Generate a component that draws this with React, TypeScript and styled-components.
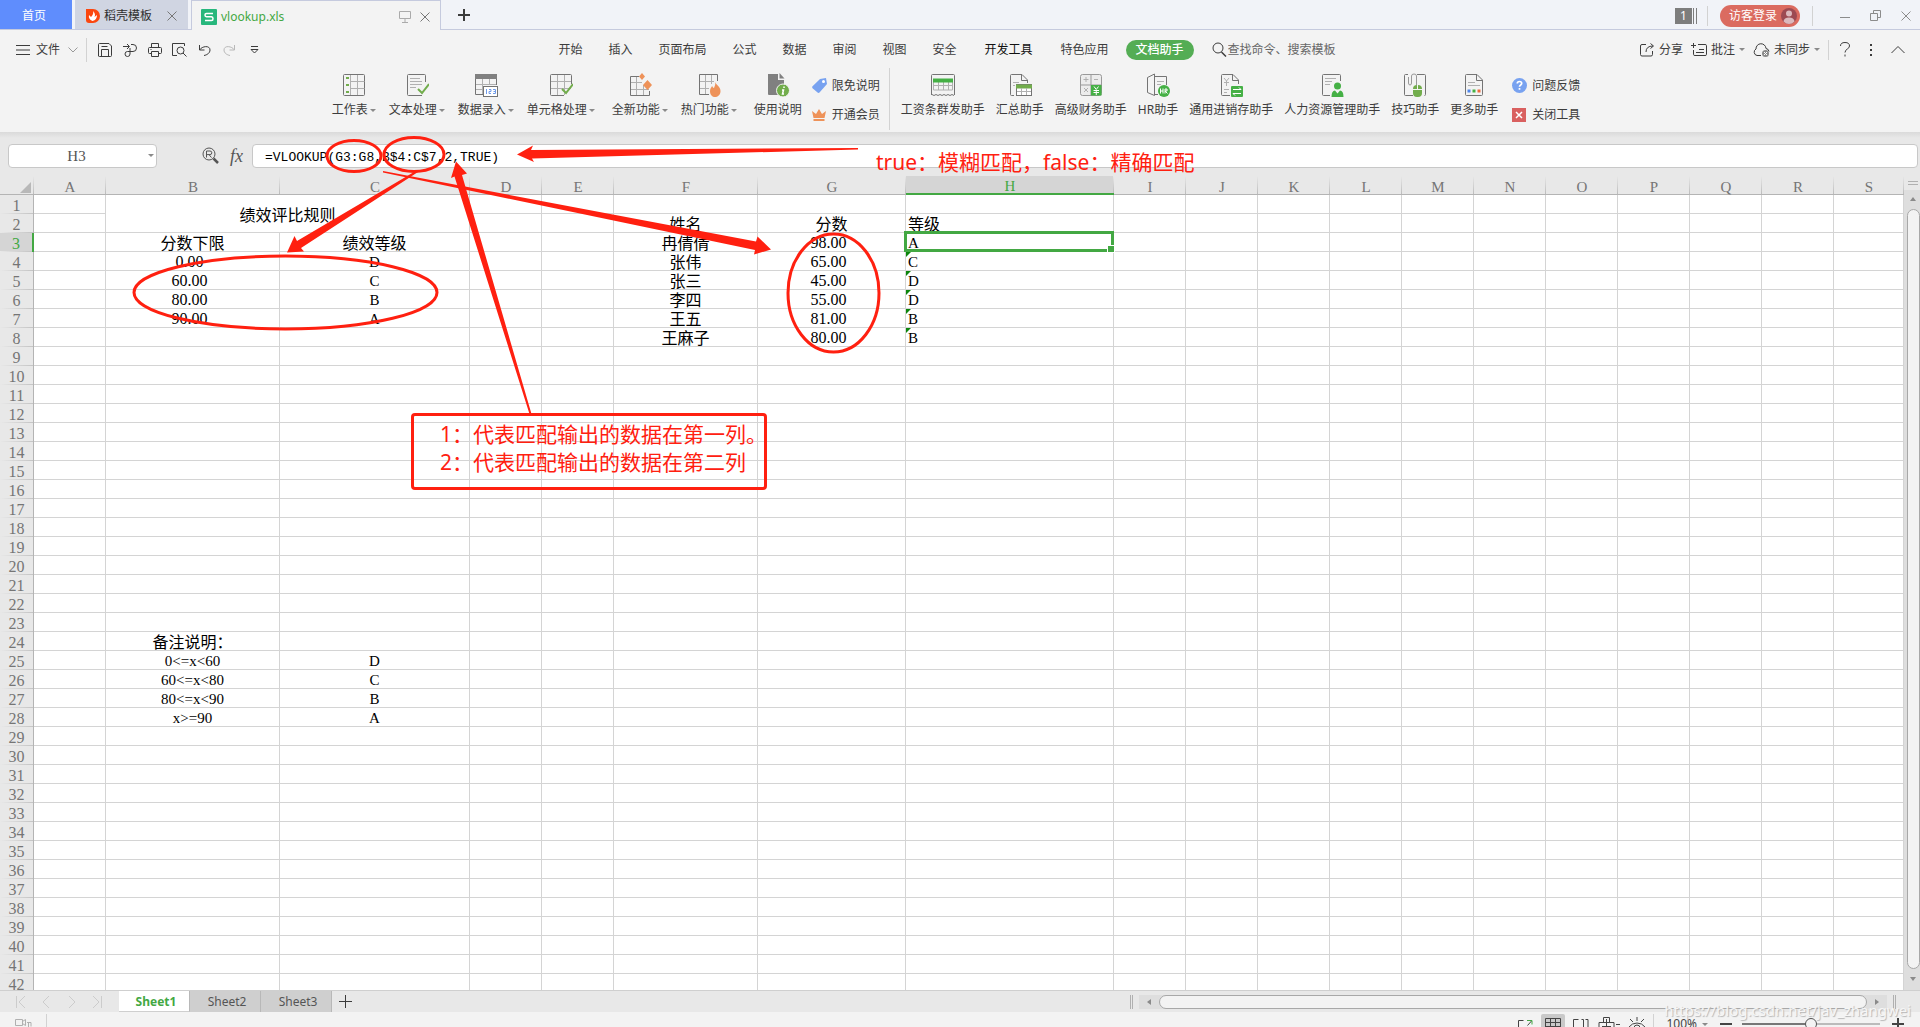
import React from 'react';
import styled, { createGlobalStyle, css } from 'styled-components';

const UI_FONT = '"Noto Sans", "Noto Sans CJK SC", sans-serif';
const CELL_FONT = '"Liberation Serif", "Noto Sans CJK SC", serif';
const MONO_FONT = '"Liberation Mono", "Noto Sans CJK SC", monospace';
const GREEN = '#43a843';
const RED = '#ff2010';

const GlobalStyle = createGlobalStyle`
  * { box-sizing: border-box; }
  body { margin: 0; background: #f3f3f3; overflow: hidden; }
  button, input { font: inherit; color: inherit; margin: 0; }
  svg { display: block; flex: none; }
`;

const Window = styled.div`
  position: relative;
  display: flex;
  flex-direction: column;
  height: 100vh;
  overflow: hidden;
  background: #e8e8e8;
  color: #3c3c3c;
  font-family: ${UI_FONT};
  font-size: 12px;
  line-height: 16px;
`;

const PlainButton = styled.button`
  display: flex;
  align-items: center;
  padding: 0;
  border: 0;
  background: none;
  white-space: nowrap;
  cursor: pointer;
`;

const Divider = styled.i<{ $h: number; $after?: number }>`
  flex: none;
  width: 1px;
  height: ${(p) => p.$h}px;
  margin-right: ${(p) => p.$after ?? 0}px;
  background: #d2d2d2;
`;

const Caret = styled.i`
  flex: none;
  border: 3px solid transparent;
  border-top-color: #8a8a8a;
  border-bottom-width: 0;
`;

/* ---------- title bar ---------- */

const TitleBar = styled.header`
  display: flex;
  flex: none;
  height: 30px;
  background: #f1f3f8;
  box-shadow: inset 0 -1px #c5cade;
`;

const HomeTab = styled(PlainButton)`
  justify-content: center;
  width: 72px;
  height: 29px;
  margin-right: 3px;
  padding: 2px 4px 0 0;
  background: #5f8dfd;
  color: #fff;
`;

const DocTab = styled.div<{ $active?: boolean; $w: number }>`
  display: flex;
  align-items: center;
  width: ${(p) => p.$w}px;
  padding: 3px 11px 0;
  background: #d0d5e2;
  margin: 0 3px 1px 0;
  color: #2f2f2f;
  ${(p) =>
    p.$active &&
    css`
      margin: 0;
      padding: 2px 10px 0 9px;
      background: #f3f3f3;
      border: 1px solid #c5cade;
      border-bottom: 0;
      color: ${GREEN};
    `}
`;

const TabTitle = styled(PlainButton)`
  flex: 1;
  gap: 4px;
`;

const TabAction = styled(PlainButton)`
  margin-left: 9px;
  color: #777;
`;

const AddTab = styled(PlainButton)`
  margin-left: 17px;
`;

const WindowTools = styled.div`
  display: flex;
  align-items: center;
  margin-left: auto;
  padding: 1px 9px 0 0;
  color: #8c8c8c;
`;

const CountBadge = styled.span`
  width: 17px;
  height: 16px;
  background: #7d7d7d;
  color: #fff;
  text-align: center;
  line-height: 16px;
`;

const BadgeBars = styled.i`
  width: 4px;
  height: 16px;
  margin: 0 10px 0 1px;
  border: solid #7d7d7d;
  border-width: 0 1px;
`;

const LoginButton = styled(PlainButton)`
  gap: 4px;
  height: 22px;
  margin: 0 12px;
  padding: 0 3px 0 9px;
  border-radius: 11px;
  background: #db6b60;
  color: #fff;
`;

const WindowButtons = styled.div`
  display: flex;
  gap: 20px;
  margin-left: 27px;
`;

/* ---------- menu row ---------- */

const MenuRow = styled.nav`
  display: grid;
  grid-template-columns: 1fr auto 1fr;
  flex: none;
  height: 38px;
  padding-top: 1px;
  background: #f3f3f3;
`;

const QuickTools = styled.div`
  display: flex;
  align-items: center;
  padding-left: 16px;
`;

const FileButton = styled(PlainButton)`
  gap: 6px;
  margin-right: 8px;
  svg:last-child { margin-left: 2px; }
`;

const QuickButton = styled(PlainButton)`
  justify-content: center;
  width: 25px;
  height: 24px;
`;

const QuickGroup = styled.div`
  display: flex;
  margin-left: 5px;
`;

const MenuTabs = styled.div`
  display: flex;
  align-items: center;
  padding-right: 35px;
`;

const MenuTab = styled(PlainButton)<{ $strong?: boolean; $last?: boolean }>`
  height: 20px;
  padding: 0 13px;
  ${(p) => p.$strong && css` padding: 0 15px; color: #111; `}
  ${(p) => p.$last && css` padding-right: 17px; `}
`;

const ActiveMenuTab = styled(PlainButton)`
  height: 20px;
  margin-right: 18px;
  padding: 0 10px;
  border-radius: 10px;
  background: #54ad54;
  color: #fff;
  font-weight: 500;
`;

const SearchBox = styled.label`
  display: flex;
  align-items: center;
  gap: 1px;
  input {
    width: 112px;
    padding: 0;
    border: 0;
    outline: 0;
    background: none;
  }
  input::placeholder { color: #666; opacity: 1; }
`;

const MenuRight = styled.div`
  display: flex;
  align-items: center;
  justify-content: flex-end;
  padding-right: 15px;
`;

const MenuAction = styled(PlainButton)`
  gap: 4px;
  margin-right: 8px;
`;

const MenuIcons = styled.div`
  display: flex;
  align-items: center;
  gap: 18px;
  margin-left: 10px;
`;

/* ---------- ribbon ---------- */

const Ribbon = styled.div`
  display: flex;
  flex: none;
  justify-content: center;
  height: 64px;
  padding-right: 8px;
  background: #f3f3f3;
`;

const RibbonGroup = styled.div<{ $gap: number; $after: number }>`
  display: flex;
  gap: ${(p) => p.$gap}px;
  margin-right: ${(p) => p.$after}px;
`;

const RibbonButton = styled(PlainButton)`
  flex-direction: column;
  gap: 5px;
  padding-top: 5px;
`;

const RibbonLabel = styled.span`
  display: flex;
  align-items: center;
  gap: 2px;
`;

const RibbonStack = styled.div<{ $after: number }>`
  display: flex;
  flex-direction: column;
  padding-top: 3px;
  margin-right: ${(p) => p.$after}px;
`;

const StackButton = styled(PlainButton)`
  gap: 5px;
  height: 29px;
`;

/* ---------- formula bar ---------- */

const FormulaBar = styled.div`
  display: flex;
  flex: none;
  align-items: center;
  height: 44px;
  padding: 3px 2px 0 8px;
  background: linear-gradient(#dadada, #e8e8e8 6px);
  color: #555;
`;

const NameBox = styled.div`
  display: flex;
  align-items: center;
  width: 149px;
  height: 24px;
  margin-right: 45px;
  padding-right: 2px;
  border: 1px solid #c8c8c8;
  border-radius: 4px;
  background: #fff;
  input {
    flex: 1;
    width: 100px;
    padding: 2px 4px 0 0;
    border: 0;
    outline: 0;
    background: none;
    text-align: center;
    font: 15px ${CELL_FONT};
  }
`;

const FxLabel = styled(PlainButton)`
  margin: 0 9px 0 11px;
  font: italic 18px/22px "Liberation Serif", serif;
`;

const FormulaInput = styled.input`
  flex: 1;
  height: 24px;
  padding: 3px 12px 0;
  border: 1px solid #c8c8c8;
  border-radius: 4px;
  outline: 0;
  background: #fff;
  && { color: #000; font: 13px ${MONO_FONT}; }
`;

/* ---------- sheet ---------- */

const SheetArea = styled.main`
  display: flex;
  flex: 1;
  min-height: 0;
`;

const GridClip = styled.div`
  flex: 1;
  min-width: 0;
  overflow: hidden;
`;

const Grid = styled.table`
  width: 100%;
  table-layout: fixed;
  border-collapse: separate;
  border-spacing: 0;
  background: #fff;
  color: #000;
  font: 16px/16px ${CELL_FONT};
`;

const ColHead = styled.th<{ $on?: boolean }>`
  height: 19px;
  padding: 4px 0 0;
  border-bottom: 1px solid #b4b4b4;
  background: linear-gradient(#e8e8e8, #bcbcbc) right / 1px 100% no-repeat #e8e8e8;
  color: #757575;
  font: 15px/14px ${CELL_FONT};
  ${(p) =>
    p.$on &&
    css`
      padding-top: 3px;
      border-bottom: 2px solid ${GREEN};
      background-color: #d5d5d5;
      color: ${GREEN};
    `}
`;

const RowHead = styled.th<{ $on?: boolean }>`
  height: 19px;
  padding: 3px 0 0;
  border-right: 1px solid #b4b4b4;
  background: linear-gradient(90deg, #e8e8e8, #c4c4c4) bottom / 100% 1px no-repeat #e8e8e8;
  color: #757575;
  font-weight: 400;
  ${(p) =>
    p.$on &&
    css`
      border-right: 2px solid ${GREEN};
      background-color: #d5d5d5;
      color: ${GREEN};
    `}
`;

const CornerHead = styled(ColHead)`
  svg { margin: 0 3px 0 auto; }
`;

type Kind = 'cjk' | 'num' | 'letter' | 'expr';

const Cell = styled.td<{ $kind?: Kind; $left?: boolean; $mark?: boolean }>`
  position: relative;
  height: 19px;
  padding: 2px 0 0 ${(p) => (p.$left ? 2 : 0)}px;
  border: solid #d4d4d4;
  border-width: 0 1px 1px 0;
  text-align: ${(p) => (p.$left ? 'left' : 'center')};
  white-space: nowrap;
  ${(p) => p.$kind === 'cjk' && css` padding-top: 0; font-family: "Noto Sans CJK SC", sans-serif; `}
  ${(p) => p.$kind === 'num' && css` padding-right: 6px; `}
  ${(p) => (p.$kind === 'expr' || p.$kind === 'letter') && css` font-size: 15px; `}
  ${(p) =>
    p.$mark &&
    css`
      &::before {
        content: '';
        position: absolute;
        top: 0;
        left: 0;
        border: solid transparent;
        border-width: 5px 5px 0 0;
        border-top-color: #0b850b;
      }
    `}
`;

const Selection = styled.span`
  position: absolute;
  z-index: 1;
  inset: -2px -1px -1px -2px;
  border: 3px solid ${GREEN};
  &::after {
    content: '';
    position: absolute;
    right: -4px;
    bottom: -4px;
    width: 6px;
    height: 6px;
    border: 1px solid #fff;
    background: ${GREEN};
  }
`;

const VScroll = styled.div`
  display: flex;
  flex-direction: column;
  align-items: center;
  width: 16px;
  padding: 0 0 1px 2px;
  background: linear-gradient(#e8e8e8 14px, #dedede 14px);
`;

const SplitHandle = styled.i<{ $vertical?: boolean }>`
  flex: none;
  width: ${(p) => (p.$vertical ? 3 : 10)}px;
  height: ${(p) => (p.$vertical ? 14 : 4)}px;
  border: solid #b0b0b0;
  border-width: ${(p) => (p.$vertical ? '0 1px' : '1px 0')};
`;

const ScrollThumb = styled.div<{ $vertical?: boolean }>`
  flex: 1;
  border: 1px solid #a8a8a8;
  border-radius: 7px;
  background: #f3f3f3;
  ${(p) => (p.$vertical ? 'width: 13px;' : 'height: 14px;')}
`;

const ArrowButton = styled(PlainButton)`
  justify-content: center;
  width: 20px;
  height: 20px;
`;

const VTop = styled.div`
  display: flex;
  flex-direction: column;
  align-items: center;
  padding-top: 5px;
  gap: 4px;
`;

/* ---------- sheet tabs and status ---------- */

const SheetBar = styled.div`
  display: flex;
  flex: none;
  height: 22px;
  border-top: 1px solid #cfcfcf;
`;

const SheetNav = styled.div`
  display: flex;
  align-items: center;
  gap: 10px;
  width: 119px;
  padding-left: 12px;
  color: #cccccc;
`;

const SheetTab = styled(PlainButton)<{ $active?: boolean }>`
  justify-content: center;
  width: 71px;
  padding: 1px 0 0 4px;
  border-right: 1px solid #b8b8b8;
  background: #cfcfcf;
  color: #555;
  ${(p) =>
    p.$active &&
    css`
      border-bottom: 1px solid #cfcfcf;
      background: #fff;
      color: ${GREEN};
      font-weight: 700;
    `}
`;

const AddSheet = styled(PlainButton)`
  margin-left: 7px;
`;

const HScroll = styled.div`
  display: flex;
  align-items: center;
  width: 766px;
  margin: 0 24px 0 auto;
`;

const HTrack = styled.div`
  display: flex;
  flex: 1;
  align-items: center;
  height: 14px;
  margin: 0 6px;
  background: #dedede;
`;

const StatusBar = styled.footer`
  display: flex;
  flex: none;
  align-items: flex-start;
  height: 15px;
  padding: 2px 16px 0 15px;
  overflow: hidden;
  background: #f3f3f3;
`;

const StatusItems = styled.div`
  display: flex;
  align-items: center;
  height: 20px;
  margin-left: auto;
  color: #444;
`;

const StatusDivider = styled(Divider)`
  margin-left: 14px;
`;

const ViewButton = styled(PlainButton)<{ $active?: boolean }>`
  justify-content: center;
  width: 24px;
  height: 20px;
  margin-right: 4px;
  border-radius: 2px;
  background: ${(p) => (p.$active ? '#c9c9c9' : 'none')};
`;

const ZoomValue = styled(PlainButton)`
  gap: 5px;
  margin: 0 12px 0 12px;
  font-size: 12px;
`;

const ZoomSlider = styled.input`
  && {
    width: 138px;
    height: 14px;
    margin: 0 12px 0 10px;
  }
  appearance: none;
  background: linear-gradient(90deg, #777 50%, #bbb 50%) center / 100% 2px no-repeat;
  &::-webkit-slider-thumb {
    appearance: none;
    width: 12px;
    height: 12px;
    border: 1px solid #555;
    border-radius: 50%;
    background: #f3f3f3;
  }
`;

/* ---------- annotations drawn over the sheet ---------- */

const Marks = styled.svg`
  position: absolute;
  top: 0;
  left: 0;
  z-index: 2;
  pointer-events: none;
`;

const Note = styled.div`
  position: absolute;
  z-index: 3;
  top: 148px;
  left: 876px;
  color: ${RED};
  font-size: 21px;
  line-height: 28px;
  white-space: nowrap;
`;

const BoxedNote = styled(Note)`
  top: 413px;
  left: 411px;
  width: 356px;
  height: 77px;
  padding: 4px 0 0 26px;
  border: 3px solid ${RED};
  border-radius: 4px;
  p { margin: 0; }
`;

const Watermark = styled.div`
  position: absolute;
  z-index: 4;
  right: 9px;
  bottom: 6px;
  color: #f6f6f6;
  font-size: 15px;
  line-height: 22px;
  text-shadow: 1px 1px 1px #b4b4b4;
`;

/* ---------- icons ---------- */

const Svg = ({ w = 14, h = 14, children, sw = 1 }: { w?: number; h?: number; sw?: number; children: React.ReactNode }) => (
  <svg width={w} height={h} viewBox={`0 0 ${w} ${h}`} fill="none" stroke="currentColor" strokeWidth={sw} aria-hidden="true">
    {children}
  </svg>
);

const CloseIcon = () => <Svg w={10} h={10}><path d="M.5.5l9 9M9.5.5l-9 9" /></Svg>;

const G = '#747474';
const L = '#b0b0b0';
const LEAF = '#72ad4c';
const BRIGHT = '#45b045';
const ORANGE = '#ee9259';

const gridLines = <path d="M8.5 2v20M15.5 2v20M2 8.5h20M2 15.5h20" stroke={L} />;
const check = <path d="M13 16l4 4 7-9" stroke={LEAF} strokeWidth="2" />;

const pictures: Record<string, React.ReactNode> = {
  sheet: <><rect x="1.5" y="1.5" width="21" height="21" rx="1" stroke={G} /><path d="M8.5 2v20M15.5 2v20M8.5 8.5h14M8.5 15.5h14" stroke={L} /><path d="M4 5h3M4 12h3M4 19h3" stroke={LEAF} strokeWidth="2" /></>,
  text: <><path d="M20.5 9V2.5q0-1-1-1h-16q-1 0-1 1v19q0 1 1 1H17" stroke={G} /><path d="M5 5.5h10M5 8.500h12M5 11.5h12M5 14.5h6" stroke={L} />{check}</>,
  entry: <><path d="M22.5 12V1.5h-21v20H10" stroke={G} /><path d="M1 3.5h22" stroke="#808080" strokeWidth="5" /><path d="M8.500 6v15M15.5 6v6M2 11.5h20M2 16.5h7" stroke={L} /><rect x="9.5" y="13.5" width="14" height="10" fill="#fff" stroke={G} /><path d="M12.5 16v5M15 16.5h2v2h-2v2h2M19 16.5h2.500v4H19M19.5 18.500h2" stroke="#6f9ae8" /></>,
  cell: <><path d="M22.5 11V2.5q0-1-1-1h-19q-1 0-1 1v19q0 1 1 1H15" stroke={G} />{gridLines}{check}</>,
  fresh: <><path d="M11 3.5H2.5v19h19V18" stroke={G} /><path d="M8.500 4v18M15.5 12v10M3 9.500h11M3 16.5h18" stroke={L} /><path d="M14 0l3 3.500-3 3.500-3-3.500zM19.500 7l4.500 5-4.500 5-4.500-5z" fill={ORANGE} stroke="none" /></>,
  hot: <><path d="M20.5 8V1.5h-18v20H12" stroke={G} /><path d="M8.500 2v19M14.5 2v9M3 8.500h14M3 15.5h9" stroke={L} /><path d="M18.500 9c0 3 5 4 5 9 0 4-3 6-5.500 6S13 22 13 18c0-3 2-4 2-5 1 1 1 2 2 2 1-2 1.500-4 1.500-6z" fill={ORANGE} stroke="none" /></>,
  manual: <><path d="M2 1h10v6h6v15H3q-1 0-1-1z" fill="#808080" stroke="none" /><path d="M13.500 0l5 5.500h-5z" fill="#808080" stroke="none" /><circle cx="17" cy="17.500" r="6.500" fill={LEAF} stroke="#f3f3f3" /><path d="M18 13.500V15M16 17h1.500l-1 4H18" stroke="#fff" strokeWidth="1.500" /></>,
  payroll: <><path d="M.5 22V2.5q0-1 1-1h21q1 0 1 1V22" stroke={G} /><path d="M1 21.5l2 1 2-1 2 1 2-1 2 1 2-1 2 1 2-1 2 1 2-1 2 1" stroke={G} /><path d="M2.5 6v11h19V6M7.5 7v10M12.5 7v10M17.5 7v10M3 12.5h18" stroke={L} /><path d="M2 7.500h20" stroke={BRIGHT} strokeWidth="4" /></>,
  summary: <><path d="M6 22.5H3.500q-1 0-1-1v-19q0-1 1-1H14l5.500 5.500v3M13.500 2v5.500h6" stroke={G} /><path d="M5 9.500h6M5 12.5h2" stroke={L} /><rect x="8.500" y="11.5" width="15" height="11" fill="#fff" stroke={G} /><path d="M8 13.5h16" stroke={LEAF} strokeWidth="4" /><path d="M13.5 15v7M18.500 15v7M9 18.500h14" stroke={L} /></>,
  finance: <><rect x="1.5" y="1.5" width="21" height="21" rx="2" fill="#ececec" stroke="#999" /><path d="M12 2v20M2 12h20" stroke="#999" /><rect x="12" y="12" width="10.500" height="10.500" fill={BRIGHT} stroke="none" /><path d="M7 4v5M4.500 6.500h5M15 6.500h4M5 15l4 4M9 15l-4 4" stroke={L} /><path d="M15 13.500l2.250 3 2.250-3M14.500 17.5h5.500M14.500 19.5h5.500M17.250 17v5" stroke="#fff" /></>,
  hr: <><path d="M8.500 1L1.500 4.500v15l7 3zM9 3.500h11.500V12M9 21.500h3" stroke={G} /><path d="M11 8.500h7M11 11.500h4" stroke={L} /><circle cx="18" cy="18" r="6" fill={BRIGHT} stroke="none" /><path d="M14.500 15.500v5M14.500 18h2.500M17 15.500v5M19 20.500V16h2v2h-2l2.500 2.500" stroke="#fff" /></>,
  stock: <><path d="M11 22.5H3.500q-1 0-1-1v-19q0-1 1-1H14l5.500 5.500V11M13.500 2v5.500h6" stroke={G} /><path d="M5 5l2.500 3L10 5M5 9.500h5M7.500 8v5M5 16.500h5M5 19.500h3" stroke={L} /><rect x="12" y="13" width="12" height="11" rx="1" fill={BRIGHT} stroke="none" /><path d="M14 16.500h8l-2-2M22 20.500h-8l2 2" stroke="#fff" /></>,
  people: <><path d="M10 22.5H3.500q-1 0-1-1v-19q0-1 1-1h16q1 0 1 1V8" stroke={G} /><path d="M5 5.500h11M5 8.500h7M5 11.500h5" stroke={L} /><circle cx="17.500" cy="13" r="3.500" fill={BRIGHT} stroke="none" /><path d="M11.500 24q0-6.500 3.500-6.500l2.500 3 2.500-3q3.500 0 3.500 6.500z" fill={BRIGHT} stroke="none" /></>,
  tips: <><path d="M5 1.5H2.500q-1 0-1 1v19q0 1 1 1H10M14 1.5h7.500q1 0 1 1v19q0 1-1 1" stroke={G} /><path d="M13.500 12V3q0-2-2.500-2T8.500 3v7q0 2-1.500 2t-1.500-2V4" stroke="#999" /><rect x="10" y="12" width="9" height="12" rx="4" fill={LEAF} stroke="none" /><path d="M14.500 12v5M10 16.500h9" stroke="#f3f3f3" /></>,
  more: <><path d="M4.500 22.500q-1 0-1-1v-19q0-1 1-1H15l5.500 5.500v14.500q0 1-1 1zM14.500 2v5.500h6" stroke={G} /><path d="M6 9.500h7M6 12.500h12" stroke={L} /><path d="M5.500 18h3" stroke="#4f86ea" strokeWidth="3" /><path d="M10.500 18h3" stroke={BRIGHT} strokeWidth="3" /><path d="M15.500 18h3" stroke="#ee6a3c" strokeWidth="3" /></>,
};

const Picture = ({ name }: { name: string }) => <Svg w={24} h={24}>{pictures[name]}</Svg>;

const quick: [string, React.ReactNode][] = [
  ['保存', <Svg><path d="M.5 13V1.500q0-1 1-1h9.500l2.500 2.500v9.500q0 1-1 1h-11q-1 0-1-.5zM3.500 13V6.500h7V13M3.500 3.500h6" /></Svg>],
  ['输出', <Svg><path d="M0 3.500h6M4 1l2.500 2.500L4 6M8 1.500h2a3.500 3.500 0 010 7H4.500a2.500 2.500 0 102.500 2.500V5" /></Svg>],
  ['打印', <Svg><path d="M3.500 4V.5h7V4M3.500 10.500H1.500q-1 0-1-1v-4q0-1 1-1h11q1 0 1 1v4q0 1-1 1h-2M3.500 8.500h7v5h-7zM2.500 6.500h1" /></Svg>],
  ['预览', <Svg w={15}><path d="M5 12.500H.5V.5h12V3" /><circle cx="8.500" cy="7.500" r="3.500" /><path d="M11 10l3.500 3.500" /></Svg>],
  ['撤销', <Svg w={13} h={12}><path d="M1.500 1v5h5M1.500 6C4 2 12 1 12 6c0 3-3 5-6 5.500" /></Svg>],
  ['恢复', <Svg w={13} h={12}><path d="M11.500 1v5h-5M11.500 6C9 2 1 1 1 6c0 3 3 5 6 5.500" stroke="#b8b8b8" /></Svg>],
  ['更多', <Svg w={9} h={8}><path d="M1 .5h7M1 3.500l3.500 3.500L8 3.500z" /></Svg>],
];

/* ---------- data ---------- */

const menuTabs = ['开始', '插入', '页面布局', '公式', '数据', '审阅', '视图', '安全'];

const ribbonLeft: [string, string][][] = [
  [['sheet', '工作表'], ['text', '文本处理'], ['entry', '数据录入'], ['cell', '单元格处理']],
  [['fresh', '全新功能'], ['hot', '热门功能']],
];

const ribbonRight: [string, string][] = [
  ['payroll', '工资条群发助手'], ['summary', '汇总助手'], ['finance', '高级财务助手'], ['hr', 'HR助手'],
  ['stock', '通用进销存助手'], ['people', '人力资源管理助手'], ['tips', '技巧助手'], ['more', '更多助手'],
];

const columns: [string, number | undefined][] = [
  ['A', 72], ['B', 174], ['C', 190], ['D', 72], ['E', 72], ['F', 144], ['G', 148], ['H', 208],
  ['I', 72], ['J', 72], ['K', 72], ['L', 72], ['M', 72], ['N', 72], ['O', 72], ['P', 72], ['Q', 72], ['R', 72], ['S', undefined],
];

const cells: Record<string, [string, Kind]> = {
  B1: ['绩效评比规则', 'cjk'],
  B3: ['分数下限', 'cjk'], C3: ['绩效等级', 'cjk'],
  B4: ['0.00', 'num'], C4: ['D', 'letter'],
  B5: ['60.00', 'num'], C5: ['C', 'letter'],
  B6: ['80.00', 'num'], C6: ['B', 'letter'],
  B7: ['90.00', 'num'], C7: ['A', 'letter'],
  F2: ['姓名', 'cjk'], G2: ['分数', 'cjk'], H2: ['等级', 'cjk'],
  F3: ['冉倩倩', 'cjk'], G3: ['98.00', 'num'], H3: ['A', 'letter'],
  F4: ['张伟', 'cjk'], G4: ['65.00', 'num'], H4: ['C', 'letter'],
  F5: ['张三', 'cjk'], G5: ['45.00', 'num'], H5: ['D', 'letter'],
  F6: ['李四', 'cjk'], G6: ['55.00', 'num'], H6: ['D', 'letter'],
  F7: ['王五', 'cjk'], G7: ['81.00', 'num'], H7: ['B', 'letter'],
  F8: ['王麻子', 'cjk'], G8: ['80.00', 'num'], H8: ['B', 'letter'],
  B24: ['备注说明：', 'cjk'],
  B25: ['0<=x<60', 'expr'], C25: ['D', 'letter'],
  B26: ['60<=x<80', 'expr'], C26: ['C', 'letter'],
  B27: ['80<=x<90', 'expr'], C27: ['B', 'letter'],
  B28: ['x>=90', 'expr'], C28: ['A', 'letter'],
};

const rows = Array.from({ length: 42 }, (_, i) => i + 1);

function SheetGrid() {
  return (
    <Grid>
      <colgroup>
        <col style={{ width: 34 }} />
        {columns.map(([name, width]) => <col key={name} style={{ width }} />)}
      </colgroup>
      <thead>
        <tr>
          <CornerHead aria-label="全选"><svg width="11" height="11"><path d="M11 0v11H0z" fill="#b8b8b8" /></svg></CornerHead>
          {columns.map(([name]) => <ColHead key={name} scope="col" $on={name === 'H'}>{name}</ColHead>)}
        </tr>
      </thead>
      <tbody>
        {rows.map((r) => (
          <tr key={r}>
            <RowHead scope="row" $on={r === 3}>{r}</RowHead>
            {columns.map(([c]) => {
              if (r <= 2 && c === 'C') return null;
              if (r === 2 && c === 'B') return null;
              const cell = cells[c + r];
              const merged = c + r === 'B1';
              return (
                <Cell
                  key={c}
                  colSpan={merged ? 2 : undefined}
                  rowSpan={merged ? 2 : undefined}
                  $kind={cell?.[1]}
                  $left={c === 'H'}
                  $mark={c === 'H' && r > 3 && r < 9}
                >
                  {cell?.[0]}
                  {c + r === 'H3' && <Selection />}
                </Cell>
              );
            })}
          </tr>
        ))}
      </tbody>
    </Grid>
  );
}

export default function App() {
  return (
    <Window>
      <GlobalStyle />

      <TitleBar>
        <HomeTab>首页</HomeTab>
        <DocTab $w={113}>
          <TabTitle>
            <svg width="14" height="16" viewBox="0 0 14 16"><path d="M0 1h7a7 7 0 010 14H3q-3 0-3-3z" fill="#fb4710" /><path d="M7 3q3 3 1.500 6L11 7q0 5-4.500 6Q2 11 3 7l2 2q3-3 2-6z" fill="#fff" /></svg>
            稻壳模板
          </TabTitle>
          <TabAction aria-label="关闭"><CloseIcon /></TabAction>
        </DocTab>
        <DocTab $w={250} $active>
          <TabTitle>
            <svg width="16" height="16" viewBox="0 0 16 16"><rect width="16" height="16" rx="1" fill="#27b77c" /><path d="M12 4.500H5.500Q4 4.500 4 6t1.500 1.750h5Q12 8 12 9.750t-1.500 1.750H4" fill="none" stroke="#fff" strokeWidth="1.500" /></svg>
            vlookup.xls
          </TabTitle>
          <TabAction aria-label="窗口"><Svg w={12} h={12}><path d="M.5.5h11v7H.5zM6 8v3M3 11.500h6" stroke="#aaa" /></Svg></TabAction>
          <TabAction aria-label="关闭"><CloseIcon /></TabAction>
        </DocTab>
        <AddTab aria-label="新建"><Svg w={12} h={12} sw={2}><path d="M6 0v12M0 6h12" /></Svg></AddTab>
        <WindowTools>
          <CountBadge>1</CountBadge>
          <BadgeBars />
          <Divider $h={20} />
          <LoginButton>
            访客登录
            <svg width="16" height="16" viewBox="0 0 16 16"><circle cx="8" cy="8" r="8" fill="#9d4a52" /><circle cx="8" cy="5.500" r="3" fill="#dcb9bd" /><path d="M2.500 13.500Q3 9.500 8 9.500t5.500 4Q11 16 8 16t-5.500-2.500z" fill="#dcb9bd" /></svg>
          </LoginButton>
          <Divider $h={20} />
          <WindowButtons>
            <PlainButton aria-label="最小化"><Svg w={10} h={11}><path d="M0 7.500h10" /></Svg></PlainButton>
            <PlainButton aria-label="还原"><Svg w={11} h={11}><path d="M.5 3.500h7v7h-7zM3.500 3V.5h7v7H8" /></Svg></PlainButton>
            <PlainButton aria-label="关闭窗口"><CloseIcon /></PlainButton>
          </WindowButtons>
        </WindowTools>
      </TitleBar>

      <MenuRow>
        <QuickTools>
          <FileButton>
            <Svg h={10}><path d="M0 .5h14M0 5h14M0 9.500h14" /></Svg>
            文件
            <Svg w={10} h={6}><path d="M.5.5L5 5 9.500.5" stroke="#999" /></Svg>
          </FileButton>
          <Divider $h={24} />
          <QuickGroup>
            {quick.map(([label, icon]) => <QuickButton key={label} aria-label={label}>{icon}</QuickButton>)}
          </QuickGroup>
        </QuickTools>
        <MenuTabs>
          {menuTabs.map((t) => <MenuTab key={t}>{t}</MenuTab>)}
          <MenuTab $strong>开发工具</MenuTab>
          <MenuTab $last>特色应用</MenuTab>
          <ActiveMenuTab>文档助手</ActiveMenuTab>
          <SearchBox>
            <Svg w={15} h={15}><circle cx="6" cy="6" r="5" /><path d="M9.500 10l4.500 4.500" strokeWidth="1.500" /></Svg>
            <input type="text" aria-label="查找命令、搜索模板" placeholder="查找命令、搜索模板" />
          </SearchBox>
        </MenuTabs>
        <MenuRight>
          <MenuAction><Svg w={15}><path d="M6 1.500H2q-1.500 0-1.500 1.500v8.500q0 1.500 1.500 1.500h9q1.500 0 1.500-1.500V8M6 9q0-6 7-6M10.500.5L13.500 3l-3 2.500" /></Svg>分享</MenuAction>
          <MenuAction><Svg w={16}><path d="M0 2.500h5M2.500 0v5M7 1.500h7q1.500 0 1.500 1v9q0 1-1.500 1H4q-1.500 0-1.500-1V7M5 9.500h8M8 6.500h5" /></Svg>批注<Caret /></MenuAction>
          <MenuAction><Svg w={17}><path d="M8 12.500H4a3.500 3.500 0 01-1-6.500 5 5 0 0110-.5 3.500 3.500 0 013 3" /><circle cx="12.500" cy="10.500" r="3.500" fill="#8a8a8a" stroke="none" /><path d="M11 9l3 3M14 9l-3 3" stroke="#fff" /></Svg>未同步<Caret /></MenuAction>
          <Divider $h={20} />
          <MenuIcons>
            <PlainButton aria-label="帮助"><Svg w={12} h={15}><path d="M1.500 4q0-3.500 4.500-3.500t4.500 3.500c0 3-4.500 3-4.500 6.500M6 12.500v2" /></Svg></PlainButton>
            <PlainButton aria-label="更多选项"><Svg w={4} h={12} sw={2}><path d="M1 1h2M1 6h2M1 11h2" /></Svg></PlainButton>
            <PlainButton aria-label="收起功能区"><Svg w={14} h={9}><path d="M.5 8L7 1.500 13.500 8" /></Svg></PlainButton>
          </MenuIcons>
        </MenuRight>
      </MenuRow>

      <Ribbon>
        {ribbonLeft.map((group) => (
          <RibbonGroup key={group[0][0]} $gap={13} $after={17}>
            {group.map(([icon, label]) => (
              <RibbonButton key={icon}><Picture name={icon} /><RibbonLabel>{label}<Caret /></RibbonLabel></RibbonButton>
            ))}
          </RibbonGroup>
        ))}
        <RibbonGroup $gap={0} $after={10}>
          <RibbonButton><Picture name="manual" /><RibbonLabel>使用说明</RibbonLabel></RibbonButton>
        </RibbonGroup>
        <RibbonStack $after={9}>
          <StackButton>
            <svg width="15" height="15" viewBox="0 0 15 15"><path d="M8 1l6-1 1 6-7.500 8.500Q6.500 15.500 5 14L.8 10.500Q-.5 9 .8 8z" fill="#78a2f0" /><circle cx="11.500" cy="3.500" r="1.500" fill="#fff" /></svg>
            限免说明
          </StackButton>
          <StackButton>
            <svg width="15" height="12" viewBox="0 0 15 12"><path d="M0 2l4 3L7 0l3 5 4-3-1.500 7h-11zM1.500 10h11v2h-11z" fill="#ee9259" /></svg>
            开通会员
          </StackButton>
        </RibbonStack>
        <Divider $h={62} $after={11} />
        <RibbonGroup $gap={11} $after={14}>
          {ribbonRight.map(([icon, label]) => (
            <RibbonButton key={icon}><Picture name={icon} /><RibbonLabel>{label}</RibbonLabel></RibbonButton>
          ))}
        </RibbonGroup>
        <RibbonStack $after={0}>
          <StackButton>
            <svg width="15" height="15" viewBox="0 0 15 15"><circle cx="7.500" cy="7.500" r="7.500" fill="#78a2f0" /><path d="M5.300 5.500q0-2 2.200-2t2.200 2c0 1.500-2.200 1.500-2.200 3.300M7.500 10v1.800" fill="none" stroke="#fff" strokeWidth="1.700" /></svg>
            问题反馈
          </StackButton>
          <StackButton>
            <svg width="15" height="14" viewBox="0 0 15 14"><rect width="14" height="14" fill="#d9605f" /><path d="M4 4l6 6M10 4l-6 6" stroke="#fff" strokeWidth="1.500" /></svg>
            关闭工具
          </StackButton>
        </RibbonStack>
      </Ribbon>

      <FormulaBar>
        <NameBox><input type="text" aria-label="名称框" defaultValue="H3" /><Caret /></NameBox>
        <PlainButton aria-label="查找"><Svg w={17} h={17}><circle cx="7" cy="7" r="6" /><path d="M4.500 10.500V4h3.500a1.800 1.800 0 010 3.600H4.500M7 7.600l2.500 3" /><path d="M11.500 11.500l4.500 4.500" strokeWidth="2.500" /></Svg></PlainButton>
        <FxLabel>fx</FxLabel>
        <FormulaInput type="text" aria-label="编辑栏" defaultValue="=VLOOKUP(G3:G8,B$4:C$7,2,TRUE)" />
      </FormulaBar>

      <SheetArea>
        <GridClip><SheetGrid /></GridClip>
        <VScroll>
          <VTop>
            <SplitHandle />
            <ArrowButton aria-label="向上滚动"><Svg w={6} h={4}><path d="M0 4l3-4 3 4z" fill="#8a8a8a" stroke="none" /></Svg></ArrowButton>
          </VTop>
          <ScrollThumb $vertical />
          <ArrowButton aria-label="向下滚动"><Svg w={6} h={4}><path d="M0 0l3 4 3-4z" fill="#8a8a8a" stroke="none" /></Svg></ArrowButton>
        </VScroll>
      </SheetArea>

      <SheetBar>
        <SheetNav>
          <PlainButton aria-label="第一张"><Svg w={16} h={12}><path d="M4.500 0v12M13 0L7 6l6 6" /></Svg></PlainButton>
          <PlainButton aria-label="上一张"><Svg w={16} h={12}><path d="M11 0L5 6l6 6" /></Svg></PlainButton>
          <PlainButton aria-label="下一张"><Svg w={16} h={12}><path d="M5 0l6 6-6 6" /></Svg></PlainButton>
          <PlainButton aria-label="最后一张"><Svg w={16} h={12}><path d="M3 0l6 6-6 6M11.500 0v12" /></Svg></PlainButton>
        </SheetNav>
        <SheetTab $active>Sheet1</SheetTab>
        <SheetTab>Sheet2</SheetTab>
        <SheetTab>Sheet3</SheetTab>
        <AddSheet aria-label="新建工作表"><Svg w={13} h={13}><path d="M6.500 0v13M0 6.500h13" /></Svg></AddSheet>
        <HScroll>
          <SplitHandle $vertical />
          <HTrack>
            <ArrowButton aria-label="向左滚动"><Svg w={4} h={6}><path d="M4 0L0 3l4 3z" fill="#8a8a8a" stroke="none" /></Svg></ArrowButton>
            <ScrollThumb />
            <ArrowButton aria-label="向右滚动"><Svg w={4} h={6}><path d="M0 0l4 3-4 3z" fill="#8a8a8a" stroke="none" /></Svg></ArrowButton>
          </HTrack>
          <SplitHandle $vertical />
        </HScroll>
      </SheetBar>

      <StatusBar>
        <Svg w={17} h={14}><path d="M.5 5.500h7v6h-7zM7.500 7.500l3-2v6l-3-2M12 8.500h4v4M13.500 9v4" stroke="#b0b0b0" /></Svg>
        <StatusDivider $h={20} />
        <StatusItems>
          <ViewButton aria-label="全屏"><Svg w={15}><path d="M.5 13.500V3.500h5M9.500 8.500l4-4.500" /><path d="M9 3.500h5v4" stroke={GREEN} /></Svg></ViewButton>
          <ViewButton $active aria-label="普通视图"><Svg w={16} h={16}><path d="M.5 2.500h15v12H.5zM5.500 3v11M10.500 3v11M1 6.500h14M1 10.500h14" /></Svg></ViewButton>
          <ViewButton aria-label="分页预览"><Svg w={16}><path d="M.5 13.500v-11h5M8.500 2.500h2v11M12.500 2.500h2.500v11" /></Svg></ViewButton>
          <ViewButton aria-label="阅读布局"><Svg w={22}><path d="M5.500 5V.5h6V5M1 13.500V5.500h15v8M8.500 2v10M4 9.500h9M18 7.500h4" /></Svg></ViewButton>
          <ViewButton aria-label="护眼模式"><Svg w={18} h={15}><path d="M9 0v4M2 2l3 3M16 2l-3 3M1 10q3-4 8-4t8 4" /><circle cx="9" cy="11" r="3" /></Svg></ViewButton>
          <Divider $h={20} />
          <ZoomValue>100%<Caret /></ZoomValue>
          <PlainButton aria-label="缩小"><Svg w={12} h={12} sw={2}><path d="M0 6h12" /></Svg></PlainButton>
          <ZoomSlider type="range" aria-label="缩放比例" min={0} max={100} defaultValue={50} />
          <PlainButton aria-label="放大"><Svg w={12} h={12} sw={2}><path d="M6 0v12M0 6h12" /></Svg></PlainButton>
        </StatusItems>
      </StatusBar>

      <Marks width="1200" height="520" viewBox="0 0 1200 520" aria-hidden="true">
        <g fill="none" stroke={RED} strokeWidth="3">
          <ellipse cx="354" cy="156" rx="27" ry="15.500" />
          <ellipse cx="414" cy="154.500" rx="30" ry="17" />
          <ellipse cx="285.500" cy="292.500" rx="151.500" ry="36.500" />
          <ellipse cx="833.500" cy="293" rx="45.500" ry="59" />
        </g>
        <g fill={RED}>
          <path d="M517 154.500l16-9-2 4.500L858 148v1.500L532 158.500l2 3.500z" />
          <path d="M287 252.500L294.500 236l2.500 5L414 172h4L301 248l3 3.500z" />
          <path d="M383 171L756 241.500l1.500-5L771 249.500 754 254.500l1-4.500L383 172.500z" />
          <path d="M456 161.500L467 173.500l-5 1.500L531.500 414h-2L454.500 176.500 451 178z" />
        </g>
      </Marks>
      <Note>true：模糊匹配，false：精确匹配</Note>
      <BoxedNote>
        <p>1：代表匹配输出的数据在第一列。</p>
        <p>2：代表匹配输出的数据在第二列</p>
      </BoxedNote>
      <Watermark>https://blog.csdn.net/jav_zhangwei</Watermark>
    </Window>
  );
}
